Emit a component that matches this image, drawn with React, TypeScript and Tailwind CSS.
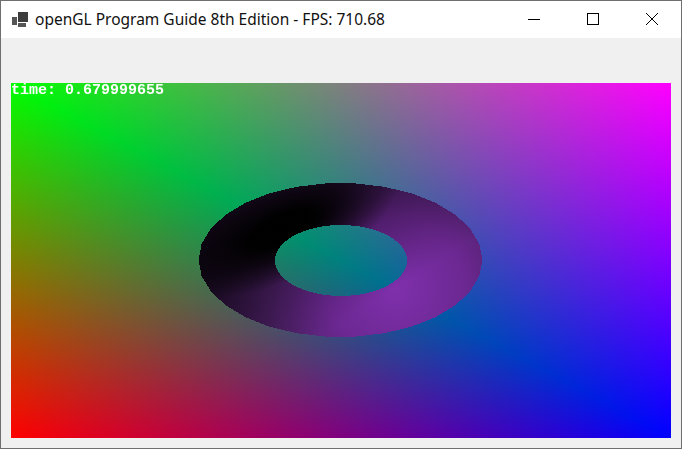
import React from "react";

// polygon ring, same look as the low-poly gl torus
function ringPoints(cx: number, cy: number, rx: number, ry: number, steps: number) {
  const out: string[] = [];
  for (let i = 0; i < steps; i++) {
    const a = (i / steps) * Math.PI * 2;
    const x = cx + rx * Math.cos(a);
    const y = cy + ry * Math.sin(a);
    out.push(`${i === 0 ? "M" : "L"}${x.toFixed(1)} ${y.toFixed(1)}`);
  }
  return out.join(" ") + " Z";
}

function Torus() {
  // coordinates are relative to the gl viewport (660x355)
  const d = ringPoints(329.5, 177, 142, 77, 30) + " " + ringPoints(330, 177.5, 66, 35.5, 64);
  return (
    <svg className="absolute inset-0" width="660" height="355" viewBox="0 0 660 355">
      <defs>
        <radialGradient id="base" gradientUnits="userSpaceOnUse" cx="385" cy="205" r="230">
          <stop offset="0" stopColor="#7f30ac" />
          <stop offset="0.3" stopColor="#6c2892" />
          <stop offset="0.55" stopColor="#4a1f62" />
          <stop offset="0.8" stopColor="#2a1238" />
          <stop offset="1" stopColor="#1c0e28" />
        </radialGradient>
        <linearGradient id="top" gradientUnits="userSpaceOnUse" x1="320" y1="100" x2="385" y2="205">
          <stop offset="0" stopColor="#000" stopOpacity="0.5" />
          <stop offset="1" stopColor="#000" stopOpacity="0" />
        </linearGradient>
        <radialGradient id="shade" gradientUnits="userSpaceOnUse" cx="0" cy="0" r="1" gradientTransform="translate(272 146) rotate(-25) scale(125 50)">
          <stop offset="0" stopColor="#000" stopOpacity="1" />
          <stop offset="0.3" stopColor="#000" stopOpacity="0.97" />
          <stop offset="0.6" stopColor="#000" stopOpacity="0.6" />
          <stop offset="1" stopColor="#000" stopOpacity="0" />
        </radialGradient>
      </defs>
      <path d={d} fill="url(#base)" fillRule="evenodd" shapeRendering="crispEdges" />
      <path d={d} fill="url(#top)" fillRule="evenodd" shapeRendering="crispEdges" />
      <path d={d} fill="url(#shade)" fillRule="evenodd" shapeRendering="crispEdges" />
    </svg>
  );
}

function GlView() {
  return (
    <div className="relative w-[660px] h-[355px] bg-black overflow-hidden isolate">
      {/* one layer per colour channel, added together gives the two gouraud triangles */}
      <div className="absolute inset-0 bg-[linear-gradient(to_top_right,#ff0000,#000000_50%,#ff0000)] mix-blend-plus-lighter" />
      <div className="absolute inset-0 mix-blend-plus-lighter isolate bg-[linear-gradient(to_right,#00ff00,#000000)]">
        <div className="absolute inset-0 bg-[linear-gradient(to_bottom,#00ff00,#000000)] mix-blend-darken" />
      </div>
      <div className="absolute inset-0 bg-[linear-gradient(to_right,#000000,#0000ff)] mix-blend-plus-lighter" />
      <Torus />
      <div className="absolute left-0 top-0 font-['Liberation_Mono',monospace] font-bold text-[15px] leading-[16px] text-white whitespace-pre">
        time: 0.679999655
      </div>
    </div>
  );
}

export default function App() {
  return (
    <div className="w-[682px] h-[449px] flex flex-col bg-[#f0f0f0] border border-[#6f6f6f] overflow-hidden">
      {/* Title bar */}
      <div className="h-[37px] shrink-0 bg-white flex items-center">
        <svg className="ml-[11px] shrink-0" width="16" height="16" viewBox="0 0 16 16">
          <rect x="6" y="0" width="10" height="10" fill="#3c3c3c" />
          <rect x="0" y="5" width="5" height="8" fill="#555555" />
          <rect x="6" y="11" width="8" height="4" fill="#555555" />
        </svg>
        <span className="ml-[7px] font-['Noto_Sans',sans-serif] text-[15.5px] text-[#111] whitespace-nowrap">
          openGL Program Guide 8th Edition - FPS: 710.68
        </span>
        <div className="ml-auto flex items-center h-full pb-px">
          <div className="w-[59px] h-full flex items-center justify-center">
            <div className="w-3 h-px bg-black" />
          </div>
          <div className="w-[59px] h-full flex items-center justify-center">
            <div className="w-3 h-3 border border-black" />
          </div>
          <div className="w-[59px] h-full flex items-center justify-center">
            <svg width="12" height="12" viewBox="0 0 12 12">
              <path d="M0 0L12 12M12 0L0 12" stroke="#000" strokeWidth="1" fill="none" />
            </svg>
          </div>
        </div>
      </div>
      {/* Client area */}
      <div className="flex-1 pl-[10px] pt-[45px]">
        <GlView />
      </div>
    </div>
  );
}
